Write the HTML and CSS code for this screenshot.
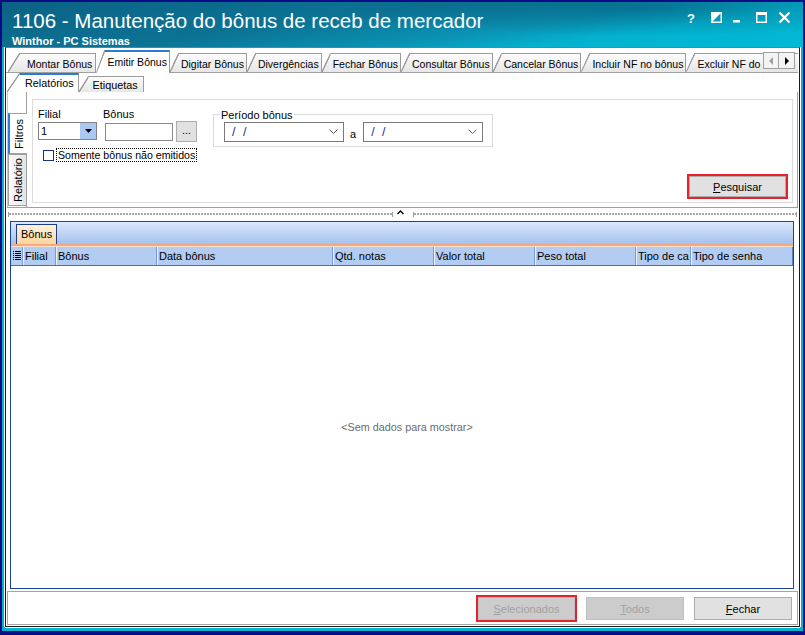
FILE: index.html
```html
<!DOCTYPE html>
<html lang="pt-BR">
<head>
<meta charset="utf-8">
<title>1106 - Manutenção do bônus de receb de mercador</title>
<link rel="stylesheet" href="styles.css">
</head>
<body>
<div class="win">
  <header class="titlebar">
    <div class="titles">
      <div class="title">1106 - Manutenção do bônus de receb de mercador</div>
      <div class="subtitle">Winthor - PC Sistemas</div>
    </div>
    <svg class="wbtns" width="106" height="14" viewBox="0 0 106 14">
      <text x="1" y="11" class="qmark">?</text>
      <rect x="25.75" y="0.75" width="9.5" height="9.5" fill="none" stroke="#fff" stroke-width="1.5"/>
      <polygon points="25,0 36,0 25,11" fill="#fff"/>
      <rect x="47" y="8" width="7" height="2.5" fill="#fff"/>
      <rect x="70.75" y="0.75" width="9.5" height="9.5" fill="none" stroke="#fff" stroke-width="1.5"/>
      <rect x="70" y="0" width="11" height="3" fill="#fff"/>
      <path d="M93.5 0.5 L103.5 10.5 M103.5 0.5 L93.5 10.5" stroke="#fff" stroke-width="2.2" fill="none"/>
    </svg>
  </header>

  <div class="client">
    <div class="tabs">
      <div class="tab first"><span>Montar Bônus</span></div>
      <div class="tab active"><span>Emitir Bônus</span></div>
      <div class="tab"><span>Digitar Bônus</span></div>
      <div class="tab"><span>Divergências</span></div>
      <div class="tab"><span>Fechar Bônus</span></div>
      <div class="tab"><span>Consultar Bônus</span></div>
      <div class="tab"><span>Cancelar Bônus</span></div>
      <div class="tab"><span>Incluir NF no bônus</span></div>
      <div class="tab last"><span>Excluir NF do bônus</span></div>
      <div class="tabscroll">
        <span class="arr">
          <svg width="6" height="8" viewBox="0 0 6 8"><polygon points="5,0 5,8 1,4" fill="#a0a0a0"/></svg>
        </span>
        <span class="arr">
          <svg width="6" height="8" viewBox="0 0 6 8"><polygon points="1,0 1,8 5,4" fill="#000"/></svg>
        </span>
      </div>
    </div>

    <div class="subtabs">
      <div class="tab active sub first"><span>Relatórios</span></div>
      <div class="tab sub"><span>Etiquetas</span></div>
    </div>

    <div class="filters">
      <div class="vtabs">
        <div class="vtab active"><span>Filtros</span></div>
        <div class="vtab"><span>Relatório</span></div>
      </div>
      <div class="panel">
        <div class="row1">
          <div class="field f-filial">
            <div class="lbl">Filial</div>
            <div class="combo">
              <span class="combo-val">1</span>
              <span class="combo-btn">
                <svg width="7" height="4" viewBox="0 0 7 4"><polygon points="0,0 7,0 3.5,4" fill="#000"/></svg>
              </span>
            </div>
          </div>
          <div class="field f-bonus">
            <div class="lbl">Bônus</div>
            <div class="bonus-ctl">
              <div class="edit"></div>
              <button class="dots" type="button">...</button>
            </div>
          </div>
          <div class="periodo">
            <span class="legend">Período bônus</span>
            <div class="date"><span class="date-val">/ /</span>
              <svg width="9" height="6" viewBox="0 0 9 6"><polyline points="0.5,0.5 4.5,4.5 8.5,0.5" fill="none" stroke="#606060" stroke-width="1"/></svg>
            </div>
            <span class="a">a</span>
            <div class="date"><span class="date-val">/ /</span>
              <svg width="9" height="6" viewBox="0 0 9 6"><polyline points="0.5,0.5 4.5,4.5 8.5,0.5" fill="none" stroke="#606060" stroke-width="1"/></svg>
            </div>
          </div>
        </div>
        <div class="chkrow">
          <span class="chk-box"></span>
          <span class="chk-label">Somente bônus não emitidos</span>
        </div>
        <div class="pesqrow">
          <button class="btn hl" type="button"><u>P</u>esquisar</button>
        </div>
      </div>
    </div>

    <div class="splitter">
      <div class="dotline"></div>
      <div class="caret"><svg width="7" height="5" viewBox="0 0 7 5"><polyline points="0.5,4 3.5,1 6.5,4" fill="none" stroke="#000" stroke-width="1.4"/></svg></div>
      <div class="dotline"></div>
    </div>

    <div class="grid">
      <div class="gridtop"><div class="gtab">Bônus</div></div>
      <div class="gline"></div>
      <div class="ghead">
        <div class="gh gh-icon">
          <svg width="8" height="10" viewBox="0 0 8 10">
            <rect x="0" y="0" width="1" height="1"/><rect x="0" y="2" width="1" height="1"/><rect x="0" y="4" width="1" height="1"/><rect x="0" y="6" width="1" height="1"/><rect x="0" y="8" width="1" height="1"/>
            <rect x="2" y="0" width="6" height="1"/><rect x="2" y="2" width="6" height="1"/><rect x="2" y="4" width="6" height="1"/><rect x="2" y="6" width="6" height="1"/><rect x="2" y="8" width="6" height="1"/>
          </svg>
        </div>
        <div class="gh">Filial</div>
        <div class="gh">Bônus</div>
        <div class="gh">Data bônus</div>
        <div class="gh">Qtd. notas</div>
        <div class="gh">Valor total</div>
        <div class="gh">Peso total</div>
        <div class="gh">Tipo de ca</div>
        <div class="gh">Tipo de senha</div>
      </div>
      <div class="gbody"><span class="empty">&lt;Sem dados para mostrar&gt;</span></div>
    </div>

    <div class="bottombar">
      <button class="btn dis hl" type="button"><u>S</u>elecionados</button>
      <button class="btn dis" type="button"><u>T</u>odos</button>
      <button class="btn" type="button"><u>F</u>echar</button>
    </div>
  </div>
</div>
</body>
</html>
```

FILE: styles.css
```css
* { box-sizing: border-box; }
html, body { margin: 0; padding: 0; }
body {
  width: 805px;
  height: 635px;
  overflow: hidden;
  background: #0b0b85;
  font-family: "Liberation Sans", Arial, sans-serif;
  font-size: 11px;
  color: #000;
}

.win {
  width: 805px;
  height: 635px;
  display: flex;
  flex-direction: column;
  border: 2px solid #0b0b85;
  border-bottom-width: 4px;
  background: #00b3d1;
  padding: 0 2px 3px;
}

/* title bar */
.titlebar {
  flex: none;
  height: 45px;
  margin: 0 -2px;
  display: flex;
  justify-content: space-between;
  align-items: flex-start;
  padding: 7px 11px 0 10px;
  color: #fff;
  background:
    radial-gradient(ellipse 420px 40px at 640px 6px, rgba(0, 60, 90, 0.35), rgba(0, 60, 90, 0) 70%),
    linear-gradient(172deg, #0b6284 0%, #0c7395 40%, #0a93b4 62%, #03b2cf 76%, #00bad5 100%);
}
.title { font-size: 20.5px; line-height: 24px; white-space: nowrap; }
.subtitle { font-weight: bold; font-size: 11px; line-height: 13px; margin-top: 2px; }
.wbtns { margin-top: 3px; flex: none; }
.qmark { font-family: "Liberation Sans", Arial, sans-serif; font-weight: bold; font-size: 13px; fill: #fff; }

/* client */
.client {
  flex: 1;
  min-height: 0;
  display: flex;
  flex-direction: column;
  background: #fff;
  border: 1px solid #1b1b1b;
  border-top-color: #3f8f9f;
  margin: 0 1px 1px;
  box-shadow: -1px 0 0 #fff, 1px 0 0 #fff, 0 1px 0 #fff;
}

/* horizontal tabs */
.tabs {
  flex: none;
  height: 25px;
  display: flex;
  align-items: flex-end;
  padding-left: 2px;
  border-bottom: 1px solid #a0a0a0;
  margin-right: 1px;
  overflow-x: clip;
  position: relative;
  font-size: 10.5px;
}
.tab {
  flex: none;
  display: flex;
  height: 19px;
  position: relative;
}
.tab::before {
  content: "";
  flex: none;
  width: 9px;
  background:
    linear-gradient(to bottom right, transparent calc(50% - 1px), #9c9c9c calc(50% - 0.4px), #9c9c9c calc(50% + 0.4px), transparent calc(50% + 1px)),
    linear-gradient(#fcfcfc, #e6e6e6);
  clip-path: polygon(calc(100% - 1.5px) 0, 100% 0, 100% 100%, 0 100%, 0 calc(100% - 1.5px));
}
.tab span {
  display: flex;
  align-items: center;
  white-space: nowrap;
  padding: 1px 2px 0 2px;
  border-top: 1px solid #9c9c9c;
  border-right: 1px solid #9c9c9c;
  background: linear-gradient(#fcfcfc, #e6e6e6);
}
.tab.first::before { width: 12px; }
.tab.first span { padding-left: 7px; padding-right: 3px; }
.tab.last span { padding-right: 30px; }
.tab.active {
  height: 23px;
  margin-bottom: -1px;
  z-index: 2;
}
.tab.active::before {
  background:
    linear-gradient(to bottom right, transparent calc(50% - 1px), #9c9c9c calc(50% - 0.4px), #9c9c9c calc(50% + 0.4px), transparent calc(50% + 1px)),
    #fff;
}
.tab.active span {
  background: #fff;
  border-top: 2px solid #2a7dd4;
  padding-bottom: 2px;
}

.tabscroll {
  position: absolute;
  right: 3px;
  top: 4px;
  display: flex;
  z-index: 3;
}
.arr {
  width: 16px;
  height: 17px;
  display: flex;
  align-items: center;
  justify-content: center;
  background: #f4f4f4;
  border: 1px solid #a0a0a0;
}
.arr + .arr { border-left: none; }

/* sub tabs */
.subtabs {
  flex: none;
  height: 19px;
  display: flex;
  align-items: flex-end;
  padding-left: 1px;
  font-size: 10.8px;
}
.tab.sub { height: 16px; }
.tab.sub.active { height: 19px; margin-bottom: 0; }
.tab.sub.first::before { width: 13px; }
.tab.sub.first span { padding-left: 5px; padding-right: 4px; }
.tab.sub span { padding-left: 4px; padding-right: 5px; }
.tab.sub::before { width: 10px; }

/* filters */
.filters {
  flex: none;
  height: 116px;
  display: flex;
  margin: 0 1px 0 1px;
  border-bottom: 1px solid #a0a0a0;
  border-right: 1px solid #a0a0a0;
}
.vtabs {
  flex: none;
  width: 20px;
  display: flex;
  flex-direction: column;
  padding-top: 21px;
  border-left: 1px solid #c8c8c8;
  border-right: 1px solid #a0a0a0;
}
.vtab {
  display: flex;
  align-items: center;
  justify-content: center;
  height: 52px;
  border: 1px solid #a0a0a0;
  border-right: none;
  background: linear-gradient(to right, #fcfcfc, #e4e4e4);
}
.vtab span {
  writing-mode: vertical-rl;
  transform: rotate(180deg);
  white-space: nowrap;
}
.vtab.active {
  height: 41px;
  margin-right: -1px;
  background: #fff;
  border-left: 2px solid #2a7dd4;
  position: relative;
  z-index: 1;
}

.panel {
  flex: 1;
  display: flex;
  flex-direction: column;
  margin: 7px 4px 4px 5px;
  border: 1px solid #dcdcdc;
  padding: 8px 2px 5px 5px;
}
.row1 { display: flex; align-items: flex-start; }
.lbl { line-height: 13px; height: 13px; }
.f-filial { width: 59px; }
.combo {
  margin-top: 1px;
  height: 18px;
  display: flex;
  border: 1px solid #828282;
  background: #fff;
}
.combo-val { flex: 1; padding-left: 2px; line-height: 16px; }
.combo-btn {
  width: 16px;
  display: flex;
  align-items: center;
  justify-content: center;
  background: #a9c9f3;
}
.f-bonus { margin-left: 6px; }
.bonus-ctl { margin-left: 2px; display: flex; align-items: center; gap: 3px; }
.edit { width: 68px; height: 18px; border: 1px solid #8a8a8a; background: #fff; }
.dots {
  width: 21px;
  height: 21px;
  padding: 0 0 3px;
  font: 11px "Liberation Sans", Arial, sans-serif;
  background: #e1e1e1;
  border: 1px solid #adadad;
  line-height: 14px;
}

.periodo {
  position: relative;
  margin: 6px 0 0 16px;
  border: 1px solid #dcdcdc;
  padding: 7px 9px 4px 10px;
  display: flex;
  align-items: center;
}
.legend {
  position: absolute;
  top: -6px;
  left: 6px;
  background: #fff;
  padding: 0 1px;
  line-height: 13px;
}
.date {
  width: 120px;
  height: 20px;
  border: 1px solid #7a7a7a;
  display: flex;
  align-items: center;
  justify-content: space-between;
  padding: 0 5px 0 7px;
}
.date-val { color: #1b2f8a; font-size: 12.5px; letter-spacing: 2px; }
.a { margin: 3px 7px 0 6px; }

.chkrow {
  display: flex;
  align-items: center;
  margin-top: 1px;
  padding-left: 5px;
}
.chk-box { width: 11px; height: 11px; border: 1px solid #1c2e86; background: #fff; }
.chk-label { margin-left: 2px; border: 1px dotted #000; padding: 0 1px; line-height: 12px; font-size: 10.6px; }

.pesqrow {
  margin-top: auto;
  display: flex;
  justify-content: flex-end;
  padding-right: 4px;
}

.btn {
  width: 97px;
  height: 21px;
  padding: 0;
  font: 11px "Liberation Sans", Arial, sans-serif;
  color: #000;
  background: #e1e1e1;
  border: 1px solid #adadad;
}
.btn.hl { outline: 2px solid #e4232b; outline-offset: 0; }
.btn.dis { color: #a2a2a2; background: #cccccc; border-color: #bfbfbf; }

/* splitter */
.splitter {
  flex: none;
  height: 12px;
  display: flex;
  align-items: center;
  padding: 0 2px 0 2px;
}
.dotline {
  flex: 1;
  height: 5px;
  border-left: 1px solid #a0a0a0;
  border-right: 1px solid #a0a0a0;
  background: repeating-linear-gradient(to right, #a8a8a8 0 2px, transparent 2px 3px) 0 1px / 100% 2px no-repeat;
}
.caret { width: 20px; display: flex; padding-left: 4px; margin-bottom: 3px; }

/* grid */
.grid {
  flex: 1;
  min-height: 0;
  margin: 1px 5px 0 4px;
  border: 1px solid #1d4596;
  display: flex;
  flex-direction: column;
}
.gridtop {
  flex: none;
  height: 22px;
  padding: 2px 0 0 5px;
  display: flex;
  align-items: flex-end;
  background: linear-gradient(#dbe8fb, #a4c2ee);
}
.gtab {
  height: 20px;
  padding: 3px 4px 0 4px;
  border: 1px solid #1d3c8c;
  border-bottom: none;
  background: linear-gradient(#fff3dc, #fcd49d);
}
.gline { flex: none; height: 3px; background: linear-gradient(#f3a97d 0 2px, #fbe3d3 2px 3px); }
.ghead {
  flex: none;
  height: 19px;
  display: grid;
  grid-template-columns: 11px 33px 101px 176px 101px 101px 101px 55px 1fr;
  background: #b3ccf1;
  border-bottom: 1px solid #4a6fb5;
}
.gh {
  padding: 3px 0 0 2px;
  border-left: 1px solid #7b9bd4;
  box-shadow: inset 1px 0 0 #e9f1fd;
  white-space: nowrap;
  overflow: hidden;
}
.gh-icon { border-left: none; box-shadow: none; padding: 4px 0 0 2px; }
.gh:last-child { border-right: 1px solid #5a7fc2; }
.gbody {
  flex: 1;
  display: flex;
  align-items: center;
  justify-content: center;
  padding-bottom: 1px;
  padding-left: 10px;
}
.empty { color: #6b6b6b; font-size: 10.8px; }

/* bottom bar */
.bottombar {
  flex: none;
  height: 34px;
  margin: 2px 1px 1px;
  border: 1px solid #a4a4a4;
  display: flex;
  justify-content: flex-end;
  align-items: flex-start;
  padding: 5px 5px 0 0;
  gap: 11px;
}
.bottombar .btn { height: 23px; width: 98px; }
.bottombar .btn.hl { width: 97px; }
.bottombar .btn:last-child { margin-left: -1px; }
```
